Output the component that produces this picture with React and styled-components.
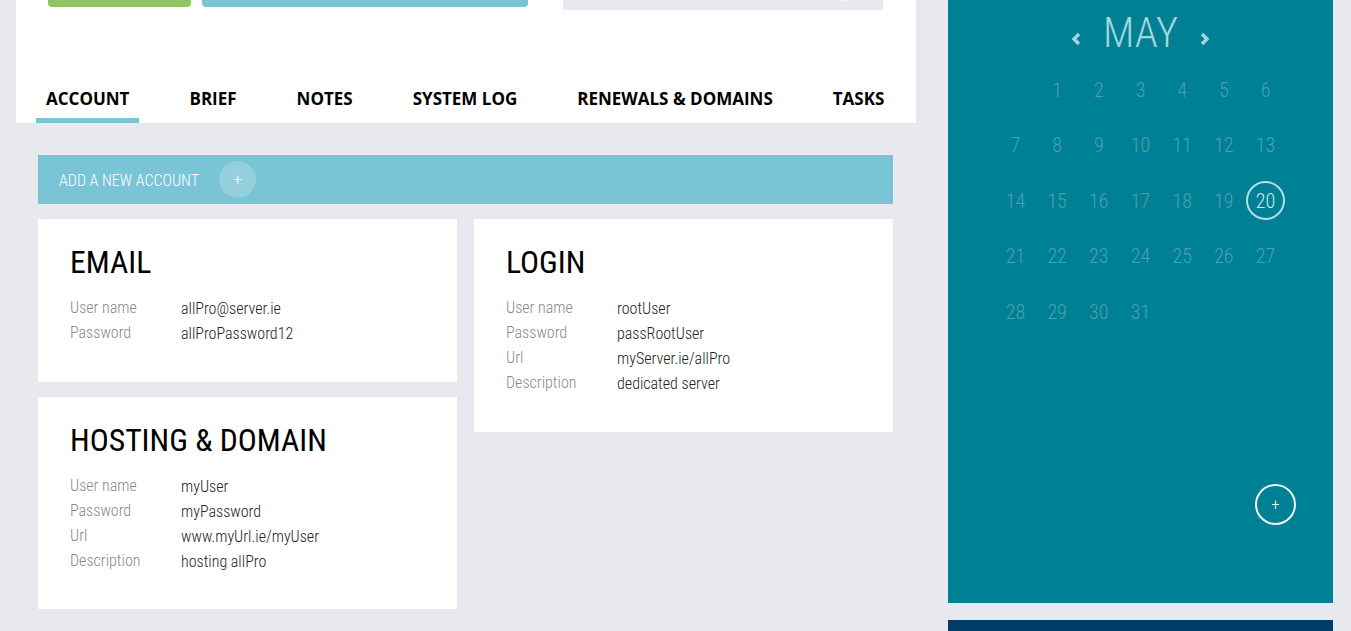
import React from "react";
import styled, { createGlobalStyle } from "styled-components";

const GlobalStyle = createGlobalStyle`
  html, body {
    margin: 0;
    padding: 0;
    background: #e8e9ee;
    overflow: hidden;
  }
  body {
    font-family: "Roboto", "Liberation Sans", sans-serif;
  }
`;

const Page = styled.div`
  display: flex;
  align-items: flex-start;
  width: 1351px;
  height: 631px;
  padding-left: 16px;
  box-sizing: border-box;
`;

const MainColumn = styled.div`
  width: 900px;
  display: flex;
  flex-direction: column;
`;

const Header = styled.header`
  height: 123px;
  background: #fff;
  display: flex;
  flex-direction: column;
  justify-content: space-between;
`;

const Toolbar = styled.div`
  display: flex;
  align-items: flex-start;
  padding-left: 32px;
`;

const ToolButton = styled.div`
  width: ${(p) => p.$w}px;
  height: 7px;
  margin-right: ${(p) => p.$mr || 0}px;
  background: ${(p) => p.$color};
  border-radius: 0 0 4px 4px;
`;

const SearchBox = styled.div`
  width: 320px;
  height: 10px;
  background: #e8e9ee;
  position: relative;
  overflow: hidden;

  &::after {
    content: "";
    position: absolute;
    right: 30px;
    top: -14px;
    width: 16px;
    height: 16px;
    border-radius: 50%;
    background: #f4f4f7;
  }
`;

const Tabs = styled.nav`
  display: flex;
  padding-left: 20px;
  gap: 40px;
`;

const Tab = styled.div`
  padding: 0 10px 9px;
  border-bottom: 5px solid ${(p) => (p.$active ? "#79c4d5" : "transparent")};
  font-family: "Open Sans", "Liberation Sans", sans-serif;
  font-weight: 700;
  font-size: 17px;
  line-height: 20px;
  color: #000;
  white-space: nowrap;
`;

const Content = styled.div`
  padding: 32px 23px 0 22px;
  display: flex;
  flex-direction: column;
  gap: 15px;
`;

const AddBar = styled.div`
  height: 49px;
  box-sizing: border-box;
  padding: 2px 0 0 21px;
  background: #79c4d5;
  display: flex;
  align-items: center;
  gap: 20px;
  color: #fff;
  font-family: "Roboto Condensed", "Roboto", sans-serif;
  font-stretch: condensed;
  font-weight: 300;
  font-size: 16px;
  line-height: 20px;
`;

const RoundAdd = styled.div`
  width: 37px;
  height: 37px;
  margin-top: -2px;
  border-radius: 50%;
  background: rgba(255, 255, 255, 0.2);
  display: flex;
  align-items: center;
  justify-content: center;
  font-size: 16px;
  color: #fff;
`;

const CardGrid = styled.div`
  display: grid;
  grid-template-columns: 419px 419px;
  column-gap: 17px;
`;

const CardStack = styled.div`
  display: flex;
  flex-direction: column;
  gap: 15px;
`;

const Card = styled.div`
  background: #fff;
  height: ${(p) => p.$h}px;
  box-sizing: border-box;
  padding: 26px 32px 0;
`;

const CardTitle = styled.h2`
  margin: 0 0 18px;
  font-family: "Roboto Condensed", "Roboto", sans-serif;
  font-stretch: condensed;
  font-weight: 400;
  font-size: 31.7px;
  line-height: 36px;
  color: #000;
`;

const Field = styled.div`
  display: grid;
  grid-template-columns: 111px 1fr;
  height: 25px;
  align-items: start;
  font-family: "Roboto Condensed", "Roboto", sans-serif;
  font-stretch: condensed;
  font-weight: 300;
  line-height: 20px;
`;

const Label = styled.span`
  color: #888;
  font-size: 16px;
  margin-top: -1px;
`;

const Value = styled.span`
  color: #222;
  font-size: 16px;
`;

const SidePanel = styled.aside`
  margin-left: 32px;
  width: 385px;
  display: flex;
  flex-direction: column;
  gap: 17px;
`;

const Calendar = styled.div`
  height: 603px;
  background: #008094;
  display: flex;
  flex-direction: column;
  align-items: center;
  padding-top: 12px;
  box-sizing: border-box;
  font-family: "Roboto Condensed", "Roboto", sans-serif;
  font-stretch: condensed;
  font-weight: 300;
`;

const MonthRow = styled.div`
  display: flex;
  align-items: center;
  gap: 19px;
  color: #a3d5de;
`;

const MonthName = styled.div`
  font-size: 42px;
  line-height: 42px;
  font-weight: 300;
`;

const Chevron = styled.svg`
  width: 15px;
  height: 16px;
  margin-top: 12px;
`;

const DayGrid = styled.div`
  display: grid;
  grid-template-columns: repeat(7, 41.7px);
  grid-auto-rows: 55.5px;
  margin-top: 8px;
`;

const Day = styled.div`
  display: flex;
  align-items: center;
  justify-content: center;
  font-size: 20px;
  color: ${(p) => (p.$today ? "#cfeaee" : "#4aa1b0")};

  span {
    width: 35px;
    height: 35px;
    display: flex;
    align-items: center;
    justify-content: center;
    border-radius: 50%;
    border: 2px solid ${(p) => (p.$today ? "#b3dde4" : "transparent")};
  }
`;

const CalendarFooter = styled.div`
  align-self: stretch;
  display: flex;
  justify-content: flex-end;
  padding-right: 37px;
  margin-top: auto;
  margin-bottom: 78px;
`;

const CircleButton = styled.div`
  width: 37px;
  height: 37px;
  border: 2px solid #f2f2f2;
  border-radius: 50%;
  display: flex;
  align-items: center;
  justify-content: center;
  color: #fff;
  font-size: 16px;
`;

const DarkPanel = styled.div`
  height: 40px;
  background: #003e69;
`;

const accounts = [
  {
    title: "EMAIL",
    h: 163,
    fields: [
      ["User name", "allPro@server.ie"],
      ["Password", "allProPassword12"],
    ],
  },
  {
    title: "HOSTING & DOMAIN",
    h: 212,
    fields: [
      ["User name", "myUser"],
      ["Password", "myPassword"],
      ["Url", "www.myUrl.ie/myUser"],
      ["Description", "hosting allPro"],
    ],
  },
];

const login = {
  title: "LOGIN",
  h: 213,
  fields: [
    ["User name", "rootUser"],
    ["Password", "passRootUser"],
    ["Url", "myServer.ie/allPro"],
    ["Description", "dedicated server"],
  ],
};

const tabs = ["ACCOUNT", "BRIEF", "NOTES", "SYSTEM LOG", "RENEWALS & DOMAINS", "TASKS"];

function AccountCard({ title, h, fields }) {
  return (
    <Card $h={h}>
      <CardTitle>{title}</CardTitle>
      {fields.map(([label, value]) => (
        <Field key={label}>
          <Label>{label}</Label>
          <Value>{value}</Value>
        </Field>
      ))}
    </Card>
  );
}

export default function App() {
  const days = [null, ...Array.from({ length: 31 }, (_, i) => i + 1)];
  return (
    <>
      <GlobalStyle />
      <Page>
        <MainColumn>
          <Header>
            <Toolbar>
              <ToolButton $w={143} $mr={11} $color="#8fc565" />
              <ToolButton $w={326} $mr={35} $color="#79c4d5" />
              <SearchBox />
            </Toolbar>
            <Tabs>
              {tabs.map((t, i) => (
                <Tab key={t} $active={i === 0}>
                  {t}
                </Tab>
              ))}
            </Tabs>
          </Header>
          <Content>
            <AddBar>
              ADD A NEW ACCOUNT
              <RoundAdd>+</RoundAdd>
            </AddBar>
            <CardGrid>
              <CardStack>
                {accounts.map((a) => (
                  <AccountCard key={a.title} {...a} />
                ))}
              </CardStack>
              <CardStack>
                <AccountCard {...login} />
              </CardStack>
            </CardGrid>
          </Content>
        </MainColumn>
        <SidePanel>
          <Calendar>
            <MonthRow>
              <Chevron viewBox="0 0 15 16">
                <path d="M10 3 L5 8 L10 13" fill="none" stroke="currentColor" strokeWidth="3.4" />
              </Chevron>
              <MonthName>MAY</MonthName>
              <Chevron viewBox="0 0 15 16">
                <path d="M5 3 L10 8 L5 13" fill="none" stroke="currentColor" strokeWidth="3.4" />
              </Chevron>
            </MonthRow>
            <DayGrid>
              {days.map((d, i) => (
                <Day key={i} $today={d === 20}>
                  {d && <span>{d}</span>}
                </Day>
              ))}
            </DayGrid>
            <CalendarFooter>
              <CircleButton>+</CircleButton>
            </CalendarFooter>
          </Calendar>
          <DarkPanel />
        </SidePanel>
      </Page>
    </>
  );
}
